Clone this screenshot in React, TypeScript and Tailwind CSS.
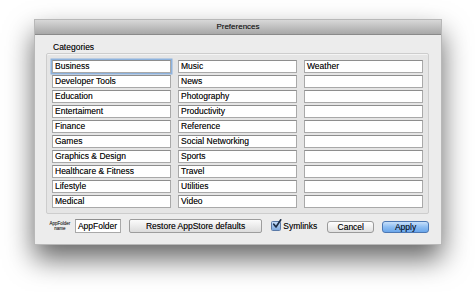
import React from 'react';

const columns: string[][] = [
  ['Business', 'Developer Tools', 'Education', 'Entertaiment', 'Finance', 'Games', 'Graphics & Design', 'Healthcare & Fitness', 'Lifestyle', 'Medical'],
  ['Music', 'News', 'Photography', 'Productivity', 'Reference', 'Social Networking', 'Sports', 'Travel', 'Utilities', 'Video'],
  ['Weather', '', '', '', '', '', '', '', '', ''],
];

const Field: React.FC<{ value: string; focused?: boolean }> = ({ value, focused }) => (
  <div
    className={`h-[13px] bg-white border border-[#a9a9a9] border-t-[#8e8e8e] pl-[2px] flex items-center leading-none text-[8.5px] text-[#111] whitespace-nowrap overflow-hidden ${
      focused ? 'shadow-[0_0_0_1.5px_#8db2dd]' : ''
    }`}
  >
    {value}
  </div>
);

const App: React.FC = () => {
  return (
    <div
      className="w-[475px] h-[292px] bg-white overflow-hidden pt-[19px] pl-[34px] [text-shadow:0_0_0.4px_rgba(0,0,0,0.55)]"
      style={{ fontFamily: '"Liberation Sans", Arial, sans-serif' }}
    >
      <div className="w-[408px] h-[226px] bg-[#ececec] border border-[#b8b8b8] shadow-[0_14px_26px_rgba(0,0,0,0.6)] flex flex-col">
        {/* title bar */}
        <div className="h-[15px] bg-gradient-to-b from-[#d8d8d8] to-[#a8a8a8] border-b border-[#8a8a8a] flex items-center justify-center text-[8px] text-[#262626] leading-none">
          Preferences
        </div>

        <div className="flex flex-col pl-[11px] pr-[12px]">
          <div className="h-[18px] pl-[7px] pt-[8px] text-[8.5px] leading-none text-[#111]">Categories</div>

          {/* group box */}
          <div className="h-[161px] bg-[#e5e5e5] border border-[#cdcdcd] rounded-[2px] shadow-[inset_0_1px_0_#f4f4f4] pt-[6px] px-[5px] flex gap-[7px]">
            {columns.map((col, ci) => (
              <div key={ci} className="w-[119px] flex flex-col gap-[2px]">
                {col.map((v, ri) => (
                  <Field key={ri} value={v} focused={ci === 0 && ri === 0} />
                ))}
              </div>
            ))}
          </div>

          {/* bottom controls */}
          <div className="mt-[5px] flex items-center h-[14px]">
            <div className="w-[28px] flex flex-col items-center text-[4.5px] leading-[5px] text-[#333]">
              <span>AppFolder</span>
              <span>name</span>
            </div>
            <div className="ml-[1px] w-[46px] h-[14px] bg-white border border-[#a9a9a9] border-t-[#8e8e8e] flex items-center pl-[2px] text-[8.5px] text-[#111] leading-none">
              AppFolder
            </div>
            <div className="ml-[8px] w-[134px] h-[14px] bg-gradient-to-b from-[#fbfbfb] to-[#dcdcdc] border border-[#9d9d9d] rounded-[2px] flex items-center justify-center text-[8.5px] text-[#111] leading-none">
              Restore AppStore defaults
            </div>
            <div className="ml-[9px] flex items-center">
              <div className="relative w-[10px] h-[10px] rounded-[1.5px] border border-[#5a7aa8] bg-gradient-to-b from-[#c4dcf7] to-[#7fa9de]">
                <svg viewBox="0 0 10 10" className="absolute left-[0px] top-[-3px] w-[10px] h-[10px]">
                  <path d="M1.8 5.2 L4 8 L8.8 0.8" fill="none" stroke="#1b2c45" strokeWidth="1.6" strokeLinecap="round" strokeLinejoin="round" />
                </svg>
              </div>
              <span className="ml-[2px] text-[8.5px] text-[#111] leading-none">Symlinks</span>
            </div>
            <div className="ml-[10px] w-[47px] h-[12px] mt-[2px] bg-gradient-to-b from-[#ffffff] to-[#e0e0e0] border border-[#9a9a9a] rounded-[3px] flex items-center justify-center text-[8.5px] text-[#111] leading-none">
              Cancel
            </div>
            <div className="ml-[8px] w-[47px] h-[12px] mt-[2px] bg-gradient-to-b from-[#c7e0fa] via-[#8dbdf2] to-[#6aa6ea] border border-[#4d78b3] rounded-[3px] flex items-center justify-center text-[8.5px] text-[#0e1c33] leading-none">
              Apply
            </div>
          </div>
        </div>
      </div>
    </div>
  );
};

export default App;
